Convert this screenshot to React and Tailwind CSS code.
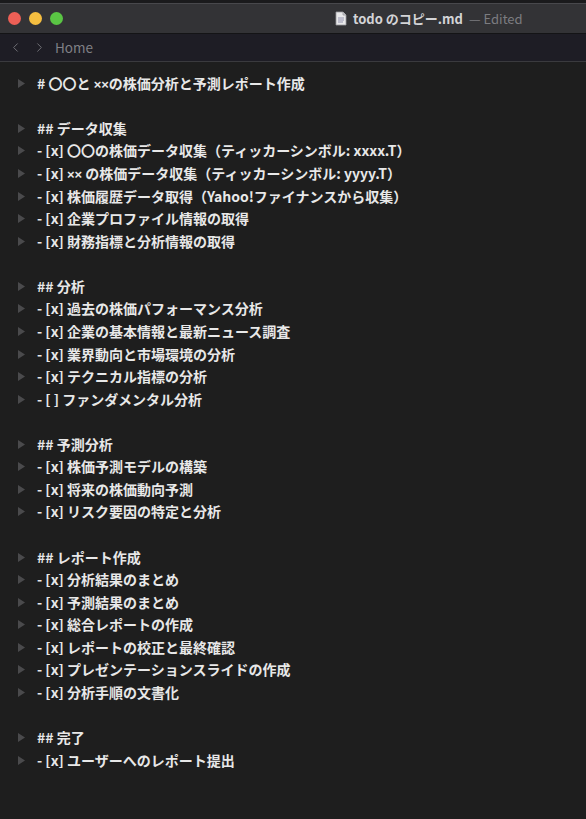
import { ChevronLeft, ChevronRight } from "lucide-react";

const lines = [
  ["# 〇〇と ", "××", "の株価分析と予測レポート作成"],
  "",
  "## データ収集",
  "- [x] 〇〇の株価データ収集（ティッカーシンボル: xxxx.T）",
  ["- [x] ", "××", " の株価データ収集（ティッカーシンボル: yyyy.T）"],
  "- [x] 株価履歴データ取得（Yahoo!ファイナンスから収集）",
  "- [x] 企業プロファイル情報の取得",
  "- [x] 財務指標と分析情報の取得",
  "",
  "## 分析",
  "- [x] 過去の株価パフォーマンス分析",
  "- [x] 企業の基本情報と最新ニュース調査",
  "- [x] 業界動向と市場環境の分析",
  "- [x] テクニカル指標の分析",
  "- [ ] ファンダメンタル分析",
  "",
  "## 予測分析",
  "- [x] 株価予測モデルの構築",
  "- [x] 将来の株価動向予測",
  "- [x] リスク要因の特定と分析",
  "",
  "## レポート作成",
  "- [x] 分析結果のまとめ",
  "- [x] 予測結果のまとめ",
  "- [x] 総合レポートの作成",
  "- [x] レポートの校正と最終確認",
  "- [x] プレゼンテーションスライドの作成",
  "- [x] 分析手順の文書化",
  "",
  "## 完了",
  "- [x] ユーザーへのレポート提出",
];

function DocIcon() {
  return (
    <svg width="12" height="15" viewBox="0 0 12 15">
      <path d="M1 1h7l3 3v10H1z" fill="#e8e8ea" stroke="#9a9aa0" strokeWidth="0.8" />
      <path d="M8 1v3h3" fill="#c8c8cc" stroke="#9a9aa0" strokeWidth="0.8" />
      <path d="M3 7h6M3 9h6M3 11h5" stroke="#8a8aa8" strokeWidth="0.9" />
    </svg>
  );
}

function LineText({ t }) {
  if (typeof t === "string") return t;
  return (
    <>
      {t[0]}
      <span className="text-[13px]" style={{ fontFamily: '"Liberation Sans", sans-serif' }}>
        {t[1]}
      </span>
      {t[2]}
    </>
  );
}

export default function App() {
  return (
    <div
      className="w-[586px] h-[819px] bg-[#1e1e1e] flex flex-col overflow-hidden"
      style={{ fontFamily: '"Noto Sans CJK JP", "Liberation Sans", sans-serif' }}
    >
      <div className="h-[3px] bg-[#1a1a1c]" />
      <div className="h-[31px] bg-[#333336] border-t border-[#48484c] border-b border-b-[#141416] flex items-center px-[8px]">
        <div className="flex items-center gap-[8px]">
          <span className="w-[13px] h-[13px] rounded-full bg-[#ed5f56]" />
          <span className="w-[13px] h-[13px] rounded-full bg-[#f5be40]" />
          <span className="w-[13px] h-[13px] rounded-full bg-[#5ac544]" />
        </div>
        <div className="ml-[272px] flex items-center gap-[6px] text-[13px]">
          <DocIcon />
          <span className="font-bold text-[#d4d4d6]">todo のコピー.md</span>
          <span className="text-[#7c7c80]">— Edited</span>
        </div>
      </div>
      <div className="h-[28px] bg-[#1e1d25] border-b border-[#3a3a3e] flex items-center pl-[8px] text-[#6e6e74]">
        <ChevronLeft size={15} strokeWidth={1.6} />
        <ChevronRight size={15} strokeWidth={1.6} className="ml-[9px]" />
        <span className="ml-[8px] text-[13.5px] text-[#808086]">Home</span>
      </div>
      <div className="pt-[10px] pl-[18px]">
        {lines.map((t, i) => (
          <div key={i} className="h-[22.57px] flex items-center">
            {t ? (
              <>
                <svg width="7" height="9" viewBox="0 0 7 9" className="mr-[12px] shrink-0">
                  <path d="M0 0L7 4.5L0 9z" fill="#4a4a4c" />
                </svg>
                <span className="text-[14px] font-bold text-[#e8e8e8] whitespace-pre">
                  <LineText t={t} />
                </span>
              </>
            ) : null}
          </div>
        ))}
      </div>
    </div>
  );
}
